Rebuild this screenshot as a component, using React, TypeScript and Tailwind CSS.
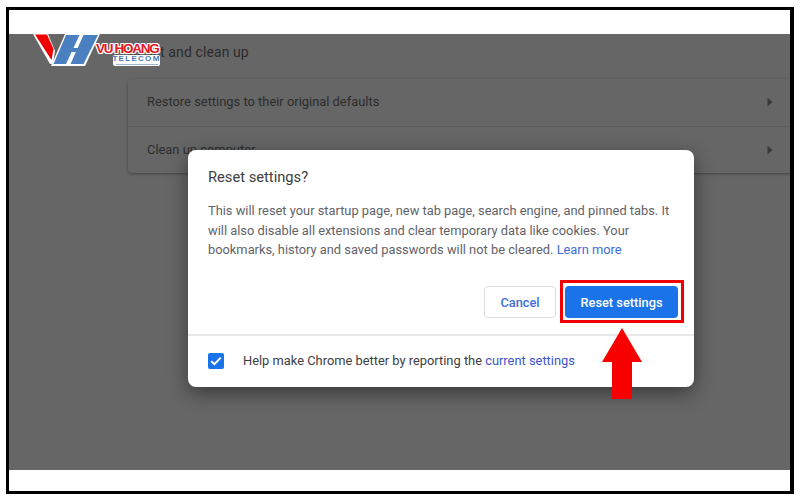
import React from "react";

function Logo() {
  return (
    <div className="absolute left-[33px] top-[34px] w-[128px] h-[32px]">
      <svg width="68" height="33" viewBox="0 0 68 33" className="absolute left-0 top-0">
        <path d="M0 0 L15 0 L22 17 L20 30 L17 30 Z" fill="#ffffff" />
        <path d="M2 0.5 L14 0.5 L20.5 15 L18.5 26 Z" fill="#f00000" />
        <path d="M18 32 L32 0 L67 0 L52 32 Z" fill="#ffffff" />
        <path d="M20.5 30 L33 1 L46.5 1 L33 30 Z" fill="#4a7fc0" />
        <path d="M37.5 30 L50.5 1 L65 1 L50.5 30 Z" fill="#4a7fc0" />
        <path d="M39 14 L49 14 L47.4 18 L37.5 18 Z" fill="#4a7fc0" />
      </svg>
      <span className="absolute left-[63px] top-[7px] text-[13.5px] leading-[15px] font-bold tracking-[-1.3px] text-[#e8141c] whitespace-nowrap font-['Liberation_Sans',sans-serif] [text-shadow:1px_0_0_#fff,-1px_0_0_#fff,0_1px_0_#fff,0_-1px_0_#fff,1px_1px_0_#fff,-1px_-1px_0_#fff,1px_-1px_0_#fff,-1px_1px_0_#fff]">
        VU HOANG
      </span>
      <span className="absolute left-[80px] top-[21px] w-[47px] h-[11px] bg-white rounded-[2px] flex flex-col items-center">
        <span className="text-[8px] leading-[8px] font-bold tracking-[1.3px] text-[#4a78b5] whitespace-nowrap font-['Liberation_Sans',sans-serif]">
          TELECOM
        </span>
        <span className="w-[42px] h-[1px] mt-[1px] bg-[#9db6d6]" />
      </span>
    </div>
  );
}

function Row({ label, border }: { label: string; border?: boolean }) {
  return (
    <div className={`flex items-center justify-between h-[47px] pl-[19px] pr-[17px] ${border ? "border-t border-[#5c5c5c]" : "pb-[1px]"}`}>
      <span className="text-[12.9px] text-[#2d2d2d]">{label}</span>
      <svg width="6" height="10" viewBox="0 0 6 10"><path d="M0.5 0.5 L5.5 5 L0.5 9.5 Z" fill="#3a3a3a" /></svg>
    </div>
  );
}

export default function App() {
  return (
    <div className="relative w-[800px] h-[500px] bg-white px-[6px] pt-[7px] pb-[6px] font-['Roboto',sans-serif] overflow-hidden">
      <div className="relative flex flex-col h-full border-[3px] border-black border-r-[4px] bg-white">
        <div className="h-[24px] shrink-0" />
        <main className="flex-1 bg-[#666666] pl-[119px]">
          <h2 className="h-[45px] pt-[8px] pl-[1px] text-[14px] leading-[20px] text-[#2b2b2b] tracking-[0.1px]">Reset and clean up</h2>
          <div className="rounded-l-[4px] bg-[#666666] shadow-[0_1px_3px_rgba(0,0,0,0.35)]">
            <Row label="Restore settings to their original defaults" />
            <Row label="Clean up computer" border />
          </div>
        </main>
        <div className="h-[21px] shrink-0" />

        {/* dialog */}
        <div className="absolute left-[179px] top-[140px] w-[506px] h-[237px] bg-white rounded-[8px] shadow-[0_6px_20px_rgba(0,0,0,0.45)] flex flex-col">
          <div className="flex-1 pl-[20px] pr-[16px] pt-[17px]">
            <h1 className="text-[14.7px] leading-[20px] text-[#3c4043]">Reset settings?</h1>
            <p className="mt-[14px] text-[12.85px] leading-[19.7px] text-[#5f6368]">
              This will reset your startup page, new tab page, search engine, and pinned tabs. It
              <br />
              will also disable all extensions and clear temporary data like cookies. Your
              <br />
              bookmarks, history and saved passwords will not be cleared. <span className="text-[#3c6bd6]">Learn more</span>
            </p>
            <div className="flex justify-end gap-[9px] mt-[26px]">
              <button className="w-[72px] h-[32px] rounded-[4px] border border-[#dadce0] bg-white text-[12.8px] font-medium text-[#3f6fd8]">Cancel</button>
              <button className="w-[113px] h-[32px] rounded-[4px] bg-[#1a73e8] text-[12.8px] font-medium text-white">Reset settings</button>
            </div>
          </div>
          <div className="h-[53px] border-t-2 border-[#e8e8e8] flex items-center pl-[20px] pb-[1px]">
            <span className="w-[16px] h-[16px] rounded-[2px] bg-[#1a73e8] flex items-center justify-center">
              <svg width="12" height="10" viewBox="0 0 12 10"><path d="M1.2 5.2 L4.4 8.2 L10.8 1.6" fill="none" stroke="#fff" strokeWidth="2" /></svg>
            </span>
            <span className="ml-[19px] text-[12.87px] text-[#3c4043]">
              Help make Chrome better by reporting the <span className="text-[#3c55c8]">current settings</span>
            </span>
          </div>
        </div>

        {/* highlight */}
        <div className="absolute left-[551px] top-[270px] w-[124px] h-[43px] border-[3px] border-[#f00000]" />
        <svg width="42" height="71" viewBox="0 0 42 71" className="absolute left-[592px] top-[318px]">
          <path d="M21 0 L41 34 L31 34 L31 71 L11 71 L11 34 L1 34 Z" fill="#f80000" />
        </svg>
      </div>
      <Logo />
    </div>
  );
}
